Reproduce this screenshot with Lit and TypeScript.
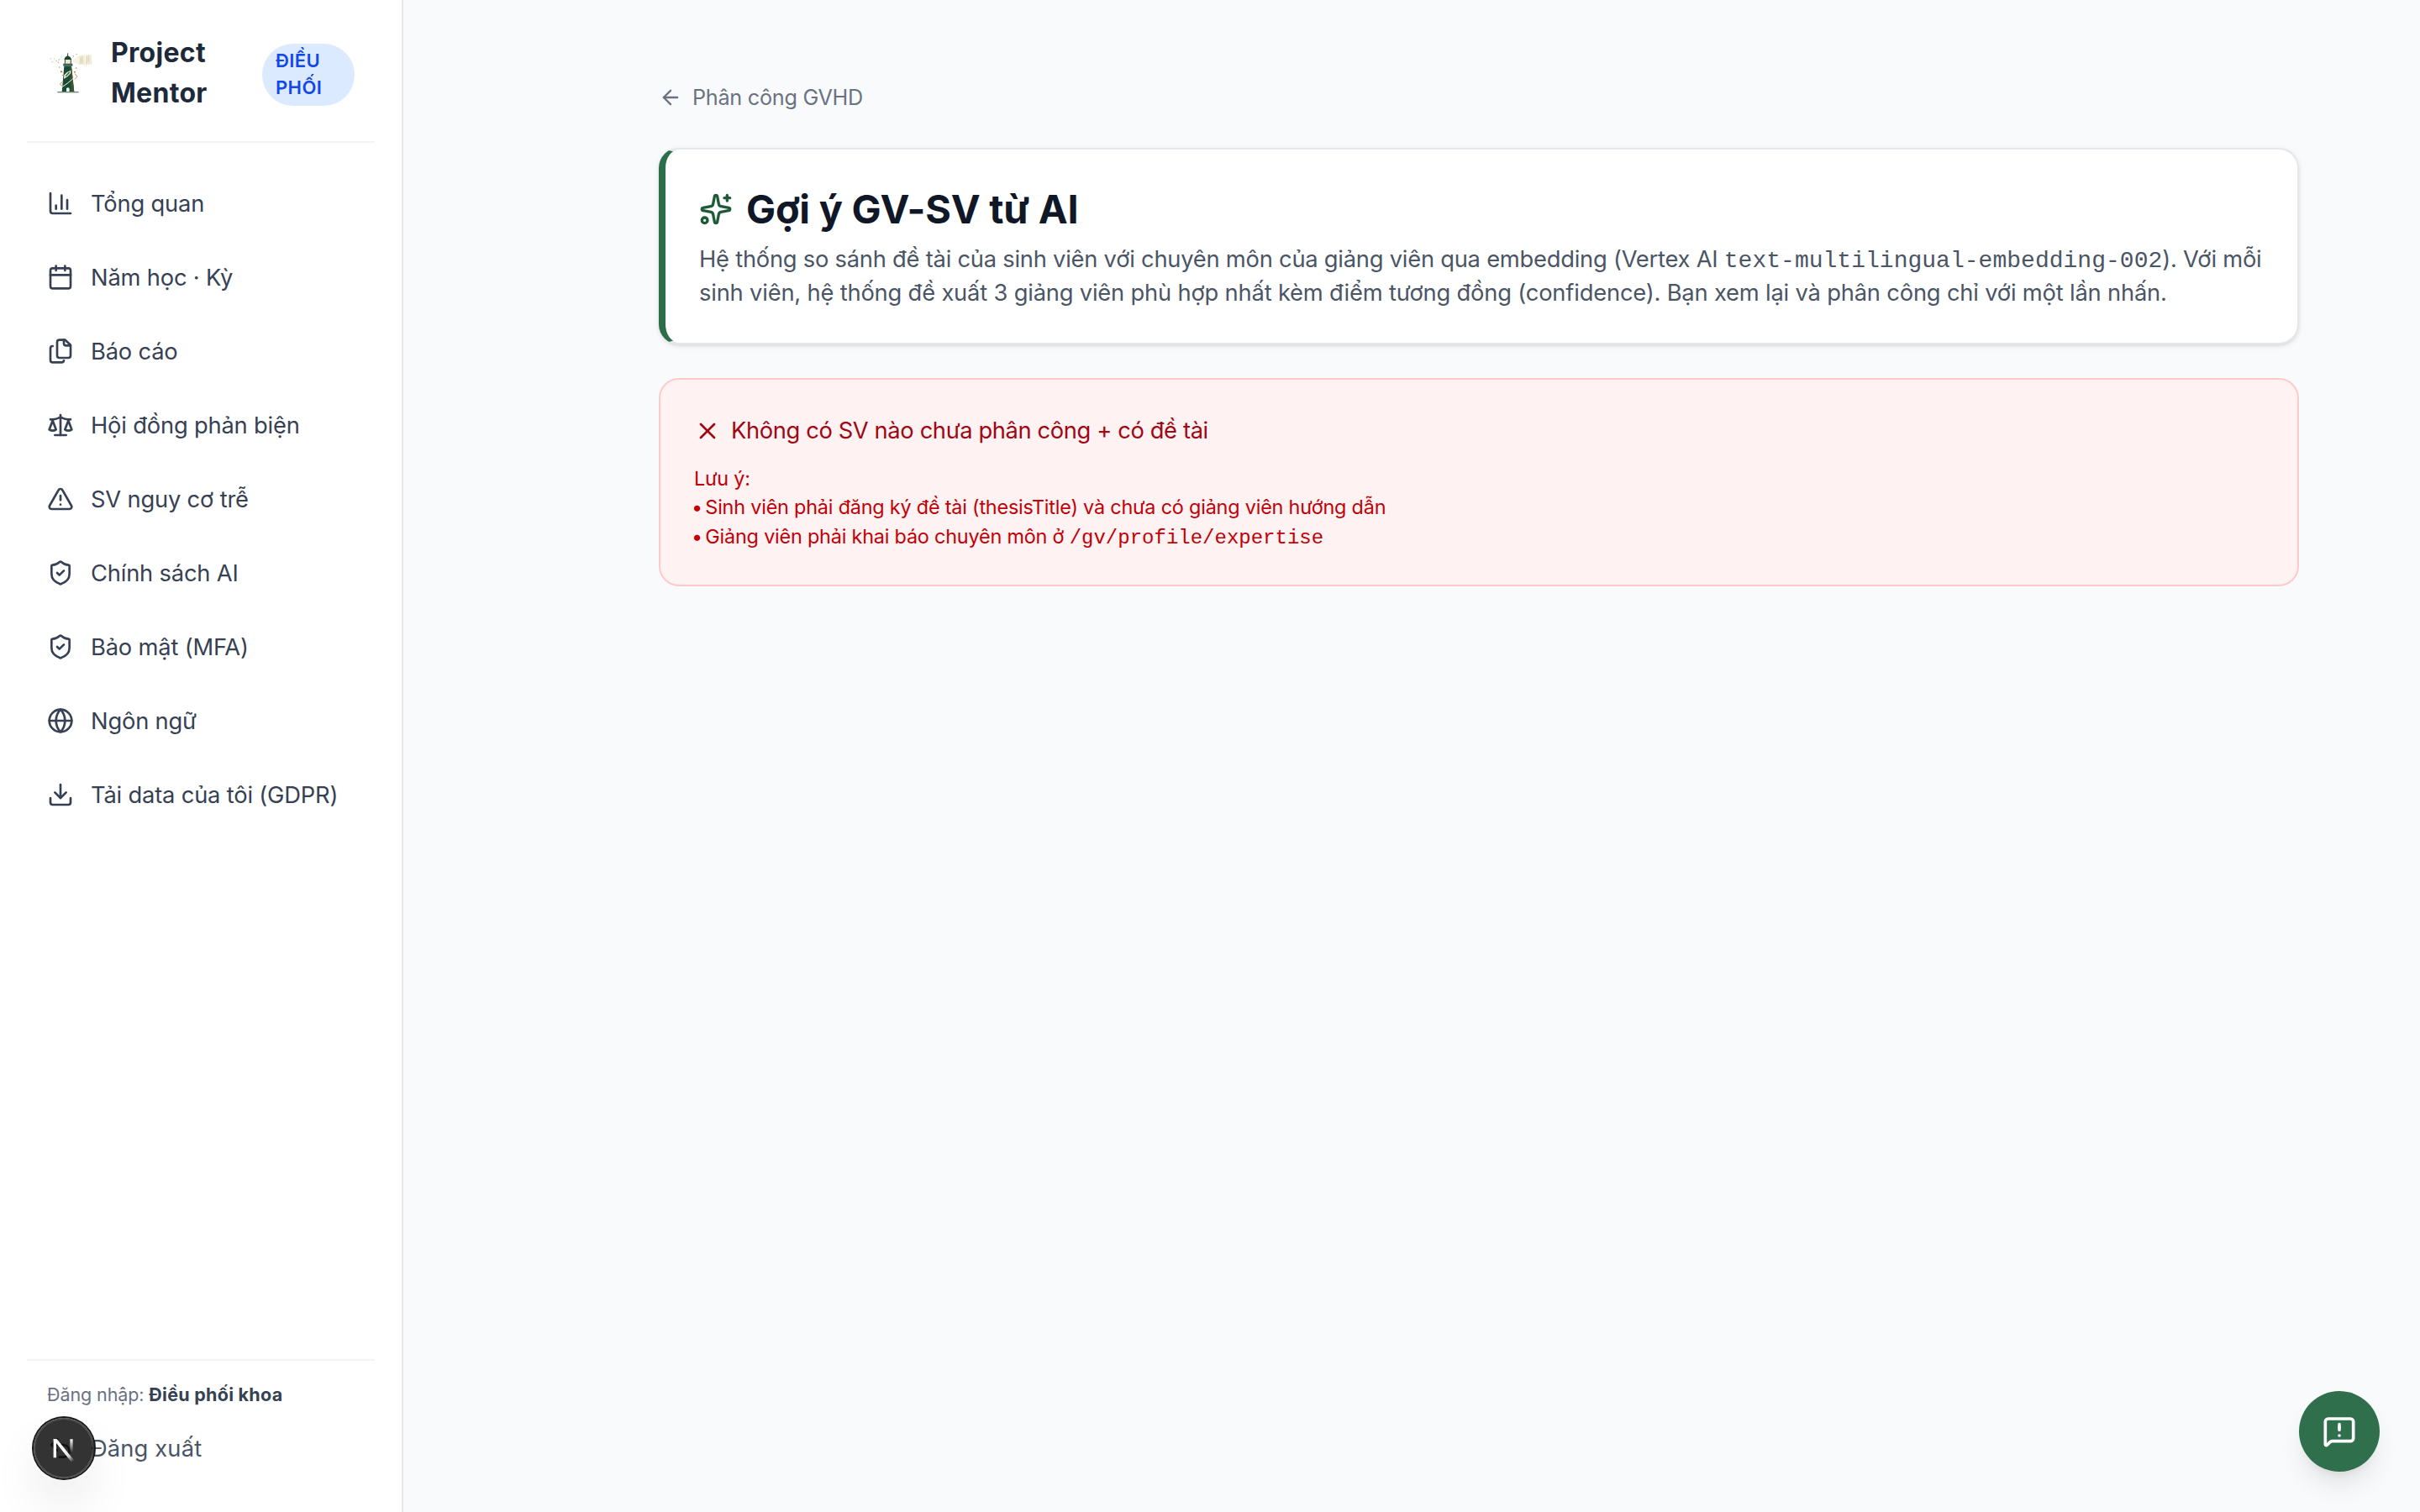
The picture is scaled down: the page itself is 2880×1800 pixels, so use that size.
import { LitElement, html, svg, css, TemplateResult } from "lit";
import { customElement, property } from "lit/decorators.js";

const ICONS: Record<string, TemplateResult> = {
  chart: svg`<path d="M3 3v16a2 2 0 0 0 2 2h16"/><path d="M8 17v-3"/><path d="M13 17V5"/><path d="M18 17V9"/>`,
  calendar: svg`<path d="M8 2v4"/><path d="M16 2v4"/><rect width="18" height="18" x="3" y="4" rx="2"/><path d="M3 10h18"/>`,
  files: svg`<path d="M20 7h-3a2 2 0 0 1-2-2V2"/><path d="M11 18a2 2 0 0 1-2-2V4a2 2 0 0 1 2-2h5.2L21 6.600V16a2 2 0 0 1-2 2Z"/><path d="M5 7.500A2 2 0 0 0 3 9.500V20a2 2 0 0 0 2 2h8a2 2 0 0 0 2-1.500"/>`,
  scale: svg`<path d="m16 16 3-8 3 8c-.87.65-1.920 1-3 1s-2.130-.35-3-1Z"/><path d="m2 16 3-8 3 8c-.87.65-1.920 1-3 1s-2.130-.35-3-1Z"/><path d="M7 21h10"/><path d="M12 3v18"/><path d="M3 7h2c2 0 5-1 7-2 2 1 5 2 7 2h2"/>`,
  alert: svg`<path d="m21.730 18-8-14a2 2 0 0 0-3.480 0l-8 14A2 2 0 0 0 4 21h16a2 2 0 0 0 1.730-3"/><path d="M12 9v4"/><path d="M12 17h.01"/>`,
  shield: svg`<path d="M20 13c0 5-3.500 7.500-7.660 8.950a1 1 0 0 1-.67-.01C7.500 20.500 4 18 4 13V6a1 1 0 0 1 1-1c2 0 4.500-1.200 6.240-2.720a1.170 1.170 0 0 1 1.520 0C14.510 3.810 17 5 19 5a1 1 0 0 1 1 1z"/><path d="m9 12 2 2 4-4"/>`,
  globe: svg`<circle cx="12" cy="12" r="10"/><path d="M12 2a14.500 14.500 0 0 0 0 20 14.500 14.500 0 0 0 0-20"/><path d="M2 12h20"/>`,
  download: svg`<path d="M21 15v4a2 2 0 0 1-2 2H5a2 2 0 0 1-2-2v-4"/><path d="m7 10 5 5 5-5"/><path d="M12 15V3"/>`,
  undo: svg`<path d="M9 14 4 9l5-5"/><path d="M4 9h10.500a5.500 5.500 0 0 1 0 11H11"/>`,
  back: svg`<path d="m12 19-7-7 7-7"/><path d="M19 12H5"/>`,
  sparkles: svg`<path d="M11.017 2.814a1 1 0 0 1 1.966 0l1.051 5.558a2 2 0 0 0 1.594 1.594l5.558 1.051a1 1 0 0 1 0 1.966l-5.558 1.051a2 2 0 0 0-1.594 1.594l-1.051 5.558a1 1 0 0 1-1.966 0l-1.051-5.558a2 2 0 0 0-1.594-1.594l-5.558-1.051a1 1 0 0 1 0-1.966l5.558-1.051a2 2 0 0 0 1.594-1.594z"/><path d="M20 2v4"/><path d="M22 4h-4"/><circle cx="4" cy="20" r="2"/>`,
  close: svg`<path d="M18 6 6 18"/><path d="m6 6 12 12"/>`,
  message: svg`<path d="M22 17a2 2 0 0 1-2 2H6.828a2 2 0 0 0-1.414.586l-2.202 2.202A.71.71 0 0 1 2 21.286V5a2 2 0 0 1 2-2h16a2 2 0 0 1 2 2z"/><path d="M12 15h.01"/><path d="M12 7v4"/>`,
};

@customElement("ui-icon")
class UiIcon extends LitElement {
  @property() name = "";
  static styles = css`
    :host { display: block; flex: none; width: 32px; height: 32px; }
    .icon { display: block; width: 100%; height: 100%; fill: none; stroke: currentColor; stroke-width: var(--stroke, 2); stroke-linecap: round; stroke-linejoin: round; }
  `;
  render() {
    return html`<svg class="icon" viewBox="0 0 24 24">${ICONS[this.name]}</svg>`;
  }
}

const NAV: [string, string][] = [
  ["chart", "Tổng quan"],
  ["calendar", "Năm học · Kỳ"],
  ["files", "Báo cáo"],
  ["scale", "Hội đồng phản biện"],
  ["alert", "SV nguy cơ trễ"],
  ["shield", "Chính sách AI"],
  ["shield", "Bảo mật (MFA)"],
  ["globe", "Ngôn ngữ"],
  ["download", "Tải data của tôi (GDPR)"],
];

@customElement("app-root")
class AppRoot extends LitElement {
  static styles = css`
    :host { display: block; font-family: Inter, "Liberation Sans", sans-serif; font-size: 27.3px; letter-spacing: -0.18px; color: #364153; }
    * { box-sizing: border-box; }
    p, h1 { margin: 0; }
    .app { display: flex; height: 1800px; background: #f9fafc; overflow: hidden; position: relative; }

    .sidebar { width: 480px; flex: none; background: #fff; border-right: 2px solid #e5e7eb; padding: 0 32px; display: flex; flex-direction: column; }
    .brand { height: 170px; width: 414px; padding: 10px 24px 0; border-bottom: 2px solid #f3f4f6; display: flex; align-items: center; }
    .logo { width: 56px; height: 56px; flex: none; display: block; }
    .name { width: 160px; margin: 0 20px 5px 20px; font-size: 32px; line-height: 48px; font-weight: 700; letter-spacing: 0.3px; color: #1e2939; }
    .role { width: 110px; flex: none; padding: 4px 16px 6px; border-radius: 37px; background: #dbeafe; color: #1447e6; font-size: 22px; line-height: 32px; font-weight: 600; letter-spacing: 0.4px; }
    .nav { flex: 1; display: flex; flex-direction: column; gap: 8px; padding-top: 32px; }
    .item { height: 80px; flex: none; display: flex; align-items: center; gap: 20px; padding: 0 24px; white-space: nowrap; }
    .foot { height: 182px; width: 414px; border-top: 2px solid #f3f4f6; padding: 24px 24px 0; }
    .who { font-size: 21.5px; line-height: 33px; letter-spacing: -0.1px; color: #6a7282; }
    .who b { color: #364153; letter-spacing: 0.26px; }
    .logout { height: 80px; margin-top: 7px; display: flex; align-items: center; gap: 20px; letter-spacing: 0.15px; color: #4a5565; }

    .main { flex: 1; padding: 96px 144.5px 0 304px; display: flex; flex-direction: column; }
    .back { height: 39px; margin-bottom: 41px; display: flex; align-items: center; gap: 12px; font-size: 25.2px; letter-spacing: -0.25px; color: #6a7282; }
    .back ui-icon { width: 28px; height: 28px; }
    .hero { border: 2px solid #e5e7eb; border-left: 8px solid #2d6e4a; border-radius: 24px; background: #fff; height: 234px; padding: 40px; box-shadow: 0 2px 6px rgba(0,0,0,.1), 0 2px 4px -2px rgba(0,0,0,.1); color: #4a5565; }
    .title { height: 61px; margin-bottom: 10px; display: flex; align-items: center; gap: 16px; font-size: 46.8px; font-weight: 700; letter-spacing: -0.2px; color: #101828; }
    .title ui-icon { width: 40px; height: 40px; color: #1f5a38; }
    .desc { line-height: 40px; letter-spacing: -0.18px; white-space: nowrap; }
    .first { letter-spacing: -0.23px; }
    .code { font-family: "Liberation Mono", monospace; font-size: 28px; line-height: 1; letter-spacing: 0; }
    .first .code { letter-spacing: 0.02px; }
    .error { margin-top: 40px; height: 248px; border: 2px solid #ffc9c9; border-radius: 24px; background: #fef2f2; padding: 41px 40px; color: #c10007; font-size: 23.4px; line-height: 34.3px; letter-spacing: -0.2px; }
    .error .code { font-size: 24px; }
    .bullet { margin: 0 -3px 0 -3px; }
    .errhead { height: 40px; margin-bottom: 20px; display: flex; align-items: center; gap: 12px; font-size: 27.3px; letter-spacing: -0.37px; color: #9f0712; }

    .fab { position: absolute; right: 48px; bottom: 48px; width: 96px; height: 96px; border-radius: 50%; background: #2f6f4b; color: #fff; display: flex; align-items: center; justify-content: center; box-shadow: 0 20px 30px -6px rgba(0,0,0,.1), 0 8px 12px -8px rgba(0,0,0,.1); --stroke: 2.2; }
    .fab ui-icon { width: 40px; height: 40px; }
    .dev { position: absolute; left: 40px; bottom: 40px; width: 72px; height: 72px; border-radius: 50%; background: rgba(0,0,0,.8); box-shadow: 0 0 0 2px #171717, inset 0 0 0 2px rgba(255,255,255,.14), 0 32px 64px -16px rgba(0,0,0,.24); }
    .mark { display: block; width: 72px; height: 72px; }
  `;

  logo() {
    return html`<svg class="logo" viewBox="48 66 168 168">
      <path d="M104 99 60 88v22l44-6z" fill="#fdfbf4" opacity=".6"/>
      <path d="M141 96 164 82v32l-23-8z" fill="#f8f3e2"/>
      <path d="M162 84q12-8 22-1 10-9 22-3l2 33q-12-2-22 5-10-8-24-3z" fill="#f1ebd8"/>
      <path d="M168 87v24M174 86v22M189 85v25M196 83v22" stroke="#d3c9a6" stroke-width="2.200"/>
      <path d="M184 84v31" stroke="#fffdf5" stroke-width="3"/>
      <g fill="#9da08f"><circle cx="61" cy="92" r="1.500"/><circle cx="63" cy="105" r="1.200"/><circle cx="68" cy="103" r="1.500"/><circle cx="74" cy="93" r="1.500"/><circle cx="81" cy="100" r="2"/><circle cx="88" cy="106" r="2.200"/><circle cx="91" cy="96" r="2"/><circle cx="99" cy="86" r="1.500"/></g>
      <g fill="#b28b4a"><circle cx="142" cy="84" r="2"/><circle cx="153" cy="76" r="2"/><circle cx="152" cy="126" r="2.500"/><circle cx="92" cy="123" r="2"/><circle cx="99" cy="139" r="3.500"/><circle cx="147" cy="140" r="3"/><circle cx="103" cy="151" r="2"/></g>
      <path d="M122 73v12" stroke="#33473c" stroke-width="3"/>
      <path d="M109 96q2-10 13-14 11 4 14 14z" fill="#1d4735"/>
      <path d="M112 96h21v14h-21z" fill="#ede7c6"/>
      <path d="M112 96v14M133 96v14" stroke="#1d4735" stroke-width="3"/>
      <path d="M106 110h33v9h-33z" fill="#28513f"/>
      <path d="M108 114h29" stroke="#8fa394" stroke-width="1.500"/>
      <path d="M109 119h26l10 93h-44z" fill="#164c36"/>
      <path d="M129 121h6l10 91h-12z" fill="#37582e"/>
      <path d="M109 151q10-13 24-17v10q-9 13-25 21z" fill="#e9e5ce"/>
      <path d="M115 155l13-14" stroke="#2f5a3f" stroke-width="4"/>
      <path d="M102 193q17-9 48-38" fill="none" stroke="#f7f3e5" stroke-width="3"/>
      <path d="M103 176l-9 7 9 9M147 146l9 11-10 10" fill="none" stroke="#b9975c" stroke-width="3"/>
      <path d="M117 211v-12q6-7 11 0v12z" fill="#f2f3eb"/>
      <path d="M85 212h76" stroke="#71857a" stroke-width="4"/>
    </svg>`;
  }

  render() {
    return html`<div class="app">
      <aside class="sidebar">
        <div class="brand">
          ${this.logo()}
          <div class="name">Project<br>Mentor</div>
          <div class="role">ĐIỀU PHỐI</div>
        </div>
        <nav class="nav">
          ${NAV.map(([icon, label]) => html`<div class="item"><ui-icon name=${icon}></ui-icon><span>${label}</span></div>`)}
        </nav>
        <div class="foot">
          <p class="who">Đăng nhập: <b>Điều phối khoa</b></p>
          <div class="logout"><ui-icon name="undo"></ui-icon><span>Đăng xuất</span></div>
        </div>
      </aside>
      <main class="main">
        <div class="back"><ui-icon name="back"></ui-icon><span>Phân công GVHD</span></div>
        <section class="hero">
          <h1 class="title"><ui-icon name="sparkles"></ui-icon><span>Gợi ý GV-SV từ AI</span></h1>
          <p class="desc"><span class="first">Hệ thống so sánh đề tài của sinh viên với chuyên môn của giảng viên qua embedding (Vertex AI <span class="code">text-multilingual-embedding-002</span>). Với mỗi</span><br>sinh viên, hệ thống đề xuất 3 giảng viên phù hợp nhất kèm điểm tương đồng (confidence). Bạn xem lại và phân công chỉ với một lần nhấn.</p>
        </section>
        <section class="error">
          <div class="errhead"><ui-icon name="close"></ui-icon><span>Không có SV nào chưa phân công + có đề tài</span></div>
          <p>Lưu ý:</p>
          <p><span class="bullet">•</span> Sinh viên phải đăng ký đề tài (thesisTitle) và chưa có giảng viên hướng dẫn</p>
          <p><span class="bullet">•</span> Giảng viên phải khai báo chuyên môn ở <span class="code">/gv/profile/expertise</span></p>
        </section>
      </main>
      <div class="fab"><ui-icon name="message"></ui-icon></div>
      <div class="dev">
        <svg class="mark" viewBox="40 1688 72 72">
          <defs>
            <linearGradient id="diag" gradientUnits="userSpaceOnUse" x1="76" y1="1726" x2="87" y2="1740"><stop offset="0" stop-color="#fff"/><stop offset=".5" stop-color="#fff" stop-opacity=".85"/><stop offset="1" stop-color="#fff" stop-opacity="0"/></linearGradient>
            <linearGradient id="bar" gradientUnits="userSpaceOnUse" x1="85" y1="1713" x2="85" y2="1729"><stop offset="0" stop-color="#fff"/><stop offset="1" stop-color="#fff" stop-opacity="0"/></linearGradient>
          </defs>
          <path d="M65.300 1713.300v22" stroke="#fff" stroke-width="3.400"/>
          <path d="M63.600 1713.300h4.200l20.500 25.200-3.200 2.200-21.500-27z" fill="url(#diag)"/>
          <path d="M83.300 1713.300h3.400v16h-3.400z" fill="url(#bar)"/>
        </svg>
      </div>
    </div>`;
  }
}
